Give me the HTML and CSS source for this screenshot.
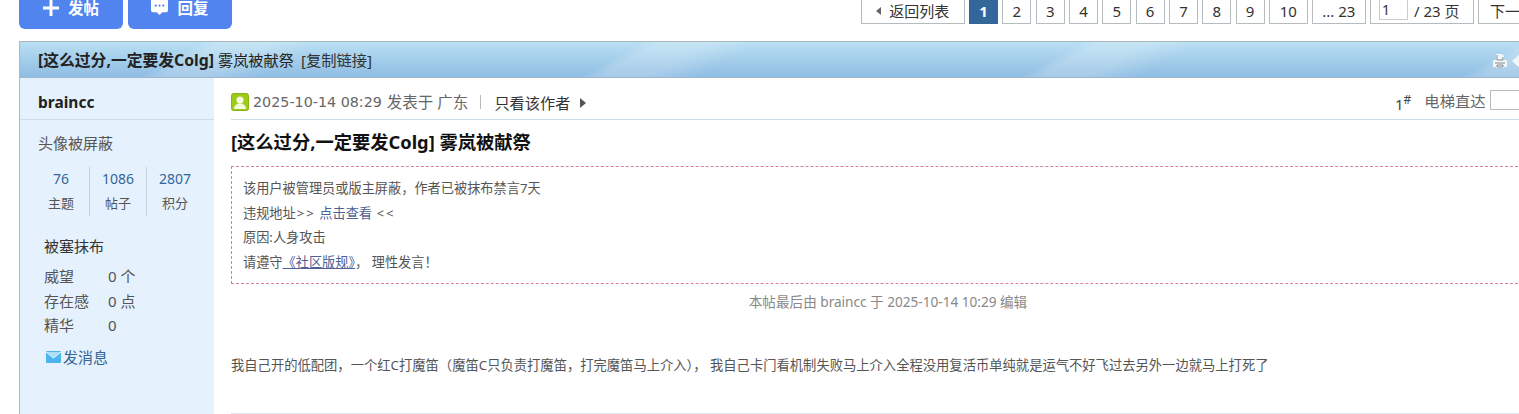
FILE: index.html
```html
<!DOCTYPE html>
<html lang="zh-CN">
<head>
    <meta charset="UTF-8">
    <title>[这么过分,一定要发Colg] 雾岚被献祭</title>
    <link rel="stylesheet" href="styles.css">
</head>
<body>
    <div class="toolbar">
        <div class="post-btns">
            <a class="post-btn">
                <svg class="plus-icon" viewBox="0 0 16 16"><path d="M6.500 0h3v6.500H16v3H9.500V16h-3V9.500H0v-3h6.500z"/></svg>
                发帖
            </a>
            <a class="post-btn">
                <svg class="reply-icon" viewBox="0 0 18 18"><path d="M2 0h14a2 2 0 0 1 2 2v10a2 2 0 0 1-2 2h-4l-3 3-3-3H2a2 2 0 0 1-2-2V2a2 2 0 0 1 2-2z"/><g class="dots"><circle cx="5" cy="7" r="1.200"/><circle cx="9" cy="7" r="1.200"/><circle cx="13" cy="7" r="1.200"/></g></svg>
                回复
            </a>
        </div>
        <div class="pager">
            <a class="page back"><span class="back-arrow"></span>返回列表</a>
            <a class="page current">1</a>
            <a class="page">2</a>
            <a class="page">3</a>
            <a class="page">4</a>
            <a class="page">5</a>
            <a class="page">6</a>
            <a class="page">7</a>
            <a class="page">8</a>
            <a class="page">9</a>
            <a class="page wide">10</a>
            <a class="page last">... 23</a>
            <label class="page jump"><input class="jump-input" value="1"> / 23 页</label>
            <a class="page next">下一页</a>
        </div>
    </div>

    <div class="thread">
        <div class="thread-head">
            <span><b class="head-tag">[这么过分,一定要发Colg]</b> 雾岚被献祭 <span class="copy-link">[复制链接]</span></span>
            <span class="head-tools">
                <svg class="print-icon" viewBox="0 0 16 16"><path d="M4 1h6l2 2v4h2a1 1 0 0 1 1 1v5a1 1 0 0 1-1 1h-2v1H4v-1H2a1 1 0 0 1-1-1V8a1 1 0 0 1 1-1h2z"/><path class="print-lines" d="M5 2v5h6V4M3 10h10M5 12h6v2H5z"/></svg>
                <svg class="prev-icon" viewBox="0 0 14 16"><path d="M9 1L1 8l8 7z"/></svg>
            </span>
        </div>
        <div class="thread-body">
            <aside class="author">
                <div class="author-name">braincc</div>
                <div class="avatar-note">头像被屏蔽</div>
                <div class="stats">
                    <div class="stat"><a>76</a><span>主题</span></div>
                    <div class="stat"><a>1086</a><span>帖子</span></div>
                    <div class="stat"><a>2807</a><span>积分</span></div>
                </div>
                <div class="rank">被塞抹布</div>
                <dl class="credits">
                    <dt>威望</dt><dd>0 个</dd>
                    <dt>存在感</dt><dd>0 点</dd>
                    <dt>精华</dt><dd>0</dd>
                </dl>
                <a class="send-msg">
                    <svg class="mail-icon" viewBox="0 0 15 12"><rect width="15" height="12" rx="1" fill="#4db4ee"/><path d="M0 1l7.500 6L15 1" fill="#a9def8" stroke="#e3f5fd"/></svg>发消息
                </a>
            </aside>
            <main class="post">
                <div class="post-meta">
                    <div class="meta-left">
                        <svg class="online-icon" viewBox="0 0 18 18"><rect x="0.500" y="0.500" width="17" height="17" rx="2" fill="#9ccb17" stroke="#8ab512"/><circle cx="9" cy="7" r="3.600" fill="#f4fbdc"/><path d="M3 16c0-4 3-5.500 6-5.500s6 1.500 6 5.500z" fill="#f4fbdc"/></svg>
                        <span class="post-date">2025-10-14 08:29</span>
                        <span class="post-from">发表于 广东</span>
                        <span class="meta-sep"></span>
                        <a class="only-author">只看该作者</a>
                        <span class="only-arrow"></span>
                    </div>
                    <div class="meta-right">
                        <span class="floor">1<sup>#</sup></span>
                        <span class="elevator">电梯直达</span>
                        <input class="floor-input">
                    </div>
                </div>
                <h1 class="post-title">[这么过分,一定要发Colg] 雾岚被献祭</h1>
                <div class="notice">
                    <p>该用户被管理员或版主屏蔽，作者已被抹布禁言7天</p>
                    <p>违规地址<span class="arrows">&gt;&gt;</span> <a class="notice-link">点击查看</a> <span class="arrows">&lt;&lt;</span></p>
                    <p>原因:人身攻击</p>
                    <p>请遵守<a class="notice-link underline">《社区版规》</a>， 理性发言！</p>
                </div>
                <div class="edit-note">本帖最后由 braincc 于 2025-10-14 10:29 编辑</div>
                <div class="post-text">我自己开的低配团，一个红C打魔笛（魔笛C只负责打魔笛，打完魔笛马上介入）， 我自己卡门看机制失败马上介入全程没用复活币单纯就是运气不好飞过去另外一边就马上打死了</div>
                <div class="post-end"></div>
            </main>
        </div>
    </div>
</body>
</html>
```

FILE: styles.css
```css
* {
    box-sizing: border-box;
}

html, body {
    margin: 0;
    height: 414px;
    overflow: hidden;
}

body {
    font-family: "Noto Sans", "Noto Sans CJK SC", sans-serif;
    font-size: 15px;
    color: #555;
    background: #fff;
}

a {
    text-decoration: none;
}

/* top bar, cut off by the top of the window */
.toolbar {
    display: flex;
    justify-content: space-between;
    align-items: flex-start;
    height: 41px;
    padding-left: 19px;
    width: 1570px;
}

.post-btns {
    display: flex;
    gap: 5px;
}

.post-btn {
    display: flex;
    align-items: center;
    justify-content: center;
    gap: 9px;
    width: 104px;
    height: 29px;
    padding-bottom: 14px;
    background: #5284f0;
    border-radius: 0 0 6px 6px;
    color: #fff;
    font-weight: 700;
    font-size: 15.5px;
}

.plus-icon {
    width: 16px;
    height: 16px;
    fill: #fff;
}

.reply-icon {
    width: 17px;
    height: 17px;
    fill: #fff;
}

.reply-icon .dots {
    fill: #5284f0;
}

.pager {
    display: flex;
    gap: 4.33px;
    width: 709px;
}

.page {
    display: flex;
    align-items: center;
    justify-content: center;
    width: 29px;
    height: 24px;
    border: 1px solid #b4bcc0;
    border-top: 0;
    background: #fff;
    color: #333;
    font-size: 15px;
    padding-bottom: 2px;
}

.page.back {
    width: 103.7px;
    gap: 8px;
}

.back-arrow {
    border: 4px solid transparent;
    border-right: 5px solid #666;
    border-left: 0;
}

.page.current {
    background: #336699;
    border-color: #336699;
    color: #fff;
    font-weight: 700;
}

.page.wide {
    width: 38.7px;
}

.page.last {
    width: 53.7px;
}

.page.jump {
    width: 103.7px;
    justify-content: flex-start;
    padding-left: 8px;
    gap: 2px;
    white-space: pre;
}

.jump-input {
    width: 29px;
    height: 20px;
    margin-top: -2px;
    border: 1px solid #ccc;
    border-top: 0;
    padding: 0 2px;
    font: 14px "Noto Sans", sans-serif;
    color: #333;
}

.page.next {
    width: 64px;
    justify-content: flex-start;
    padding-left: 11px;
}

/* thread box */
.thread {
    margin-left: 19px;
    width: 1540px;
    border: 1px solid #a9b9bd;
    border-bottom: 0;
    height: 373px;
}

.thread-head {
    display: flex;
    justify-content: space-between;
    align-items: center;
    height: 36px;
    padding: 0 33px 0 18px;
    border-bottom: 1px solid #9cb8d0;
    color: #222;
    font-size: 15.2px;
    background:
        repeating-linear-gradient(150deg, rgba(255, 255, 255, 0) 0 90px, rgba(255, 255, 255, 0.2) 100px 125px, rgba(255, 255, 255, 0) 150px 220px),
        linear-gradient(#b9dff3, #8fbde3);
}

.head-tag {
    font-size: 15.8px;
}

.copy-link {
    color: #333;
    font-size: 15.3px;
    margin-left: 3px;
}

.head-tools {
    display: flex;
    align-items: center;
    gap: 3px;
    margin-top: 2px;
}

.print-icon {
    width: 16px;
    height: 16px;
    fill: #f4f7f9;
}

.print-lines {
    fill: none;
    stroke: #7e8b94;
    stroke-width: 1;
}

.prev-icon {
    width: 14px;
    height: 16px;
    fill: #f4f7f9;
}

.thread-body {
    display: flex;
    height: 336px;
}

.author {
    width: 194px;
    flex-shrink: 0;
    background: #e5f1fc;
}

.author-name {
    height: 42px;
    padding: 15px 0 0 18px;
    border-bottom: 1px solid #cfdde8;
    font-weight: 700;
    font-size: 15.5px;
    line-height: 18px;
    color: #222;
}

.avatar-note {
    padding: 13px 0 0 18px;
    line-height: 20px;
}

.stats {
    display: flex;
    margin: 14px 0 0 13px;
    width: 170px;
}

.stat {
    flex: 1;
    display: flex;
    flex-direction: column;
    align-items: center;
    height: 49px;
    gap: 6px;
    padding-top: 3px;
    border-left: 1px solid #c6d2dc;
    line-height: 18px;
    font-size: 13px;
}

.stat:first-child {
    border-left: 0;
}

.stat a {
    color: #336699;
    font-size: 14px;
}

.rank {
    margin: 20px 0 0 24px;
    color: #333;
    line-height: 20px;
}

.credits {
    display: grid;
    grid-template-columns: 64px 1fr;
    row-gap: 4.5px;
    margin: 10px 0 0 24px;
    line-height: 20px;
}

.credits dd {
    margin: 0;
}

.send-msg {
    display: flex;
    align-items: center;
    gap: 2px;
    margin: 12px 0 0 26px;
    color: #336699;
    line-height: 20px;
}

.mail-icon {
    width: 15px;
    height: 12px;
}

.post {
    flex: 1;
    padding: 0 0 0 17px;
    min-width: 0;
}

.post-meta {
    display: flex;
    justify-content: space-between;
    align-items: center;
    height: 42px;
    padding-top: 6px;
    border-bottom: 1px solid #cbdde6;
    color: #666;
}

.meta-left {
    display: flex;
    align-items: center;
}

.online-icon {
    width: 18px;
    height: 18px;
    margin-right: 4px;
}

.post-date {
    font-family: "DejaVu Sans", sans-serif;
    font-size: 14.3px;
    margin-right: 5px;
}

.post-from {
    font-size: 15.5px;
}

.meta-sep {
    width: 1px;
    height: 14px;
    margin: 0 13px 0 12px;
    background: #bbb;
}

.only-author {
    color: #333;
    font-size: 15.2px;
}

.only-arrow {
    margin: 3px 0 0 10px;
    border: 5px solid transparent;
    border-left: 6px solid #555;
    border-right: 0;
}

.meta-right {
    display: flex;
    align-items: center;
    width: 163px;
}

.floor {
    font-size: 15px;
    margin: 5px 13px 0 0;
    color: #444;
}

.floor sup {
    font-size: 12px;
    vertical-align: 6px;
    line-height: 0;
}

.elevator {
    font-size: 15.3px;
    margin-right: 4px;
    margin-top: -4px;
}

.floor-input {
    width: 40px;
    height: 20px;
    margin-top: -3px;
    border: 1px solid #bbb;
}

.post-title {
    margin: 11px 0 13px;
    font-size: 18.3px;
    line-height: 22px;
    color: #111;
}

.notice {
    height: 118px;
    padding: 9px 11px 0;
    border: 1px dashed #d8808f;
    font-size: 13.2px;
}

.notice p {
    margin: 0;
    line-height: 24.5px;
}

.arrows {
    letter-spacing: 2px;
    margin-left: 1px;
}

.notice-link {
    color: #4f5f94;
}

.notice-link.underline {
    text-decoration: underline;
}

.edit-note {
    margin-top: 8px;
    padding-right: 13px;
    text-align: center;
    font-size: 13.6px;
    line-height: 20px;
    color: #888;
}

.post-text {
    margin-top: 43px;
    font-size: 13.3px;
    line-height: 20px;
    white-space: nowrap;
}

.post-end {
    margin-top: 38px;
    border-top: 1px solid #dde3e8;
}
```
